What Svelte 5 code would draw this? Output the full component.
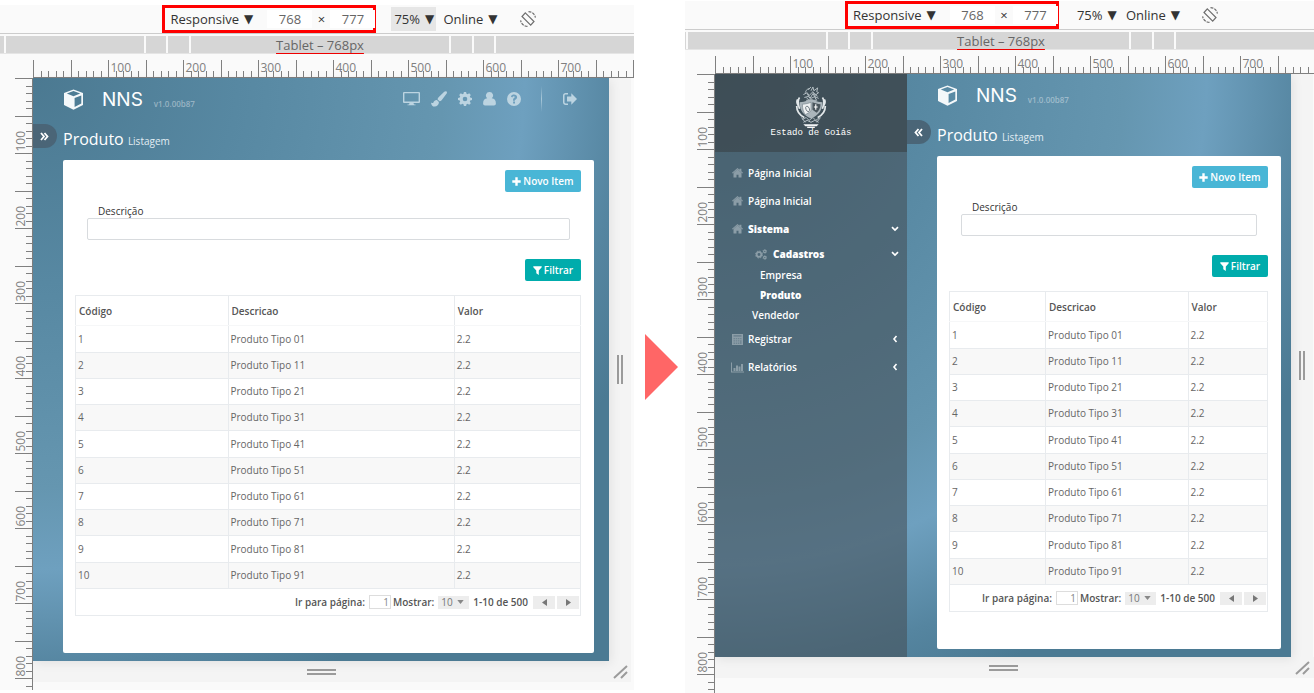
<script>
  const SCALE = 0.75;
  const ticks = Array.from({ length: 90 }, (_, i) => {
    const major = i % 5 === 0;
    return { at: Math.round(i * 10 * SCALE) + 0.5, major, label: i > 0 && i % 10 === 0 ? String(i * 10) : '' };
  });
  const ticksX = ticks.map((t, i) => (i < 80 ? t : { ...t, label: '' }));

  const rows = Array.from({ length: 10 }, (_, i) => ({ code: i + 1, name: `Produto Tipo ${i}1`, value: '2.2' }));

  const menu = [
    { label: 'Página Inicial', icon: 'home', level: 1 },
    { label: 'Página Inicial', icon: 'home', level: 1 },
    { label: 'Sistema', icon: 'home', level: 1, bold: true, arrow: 'down' },
    { label: 'Cadastros', icon: 'cogs', level: 2, bold: true, arrow: 'down' },
    { label: 'Empresa', level: 4 },
    { label: 'Produto', level: 4, bold: true },
    { label: 'Vendedor', level: 3 },
    { label: 'Registrar', icon: 'calc', level: 1, arrow: 'left' },
    { label: 'Relatórios', icon: 'chart', level: 1, arrow: 'left' }
  ];

  const tools = [
    { name: 'desktop', title: 'Tela' },
    { name: 'brush', title: 'Tema' },
    { name: 'gear', title: 'Configurações' },
    { name: 'user', title: 'Usuário' },
    { name: 'help', title: 'Ajuda' }
  ];
</script>

{#snippet icon(name)}
  {#if name === 'desktop'}
    <svg width="17" height="14" viewBox="0 0 17 14"><path fill-rule="evenodd" d="M1 0h15a1 1 0 0 1 1 1v9a1 1 0 0 1-1 1h-5.500l.5 1.500h1.500V13.300h-8V12.500H6L6.500 11H1a1 1 0 0 1-1-1V1a1 1 0 0 1 1-1zm.4 1.300v8.200h14.200V1.300z" /></svg>
  {:else if name === 'brush'}
    <svg width="16" height="16" viewBox="0 0 16 16"><path d="M15.600.5c.6.600.4 1.500-.1 2.300L10.600 9.200c-.6.700-1.200 1.100-2 1.100L6.600 8.400c0-.8.300-1.500 1-2.100L13.200.8c.8-.7 1.700-.9 2.400-.3zM5.900 9.100l2 1.900c.2 2.600-1.800 4.600-4.200 4.600C1.300 15.600.3 13.900 0 11.400c1 .7 1.700 1 2.300.3.700-1.500 1.900-2.700 3.600-2.600z" /></svg>
  {:else if name === 'gear'}
    <svg width="14" height="14" viewBox="0 0 14 14"><path fill-rule="evenodd" d="M5.900 0h2.200l.4 1.800 1.100.5 1.600-1 1.600 1.600-1 1.500.4 1.200 1.800.3v2.200l-1.800.4-.4 1.100 1 1.600-1.600 1.600-1.600-1-1.100.4L8.100 14H5.900l-.4-1.800-1.100-.4-1.600 1-1.600-1.600 1-1.600-.4-1.100L0 8.100V5.900l1.800-.3.400-1.200-1-1.500 1.600-1.600 1.600 1 1.100-.5zM7 4.700a2.300 2.300 0 1 0 0 4.600 2.300 2.300 0 0 0 0-4.600z" /></svg>
  {:else if name === 'user'}
    <svg width="13" height="14" viewBox="0 0 13 14"><path d="M6.500 0a3.500 3.500 0 0 1 2.300 6.200c2.700.1 4.100 2 4.100 5.300 0 1.200-.8 2-1.900 2H2c-1.100 0-1.900-.8-1.900-2C.1 8.200 1.500 6.300 4.200 6.200A3.500 3.500 0 0 1 6.500 0z" /></svg>
  {:else if name === 'help'}
    <svg width="14" height="14" viewBox="0 0 14 14"><path fill-rule="evenodd" d="M7 0a7 7 0 1 1 0 14A7 7 0 0 1 7 0zM6.100 9.600v1.900h1.900V9.600zM3.900 4.400l1.300 1c.5-.7.900-1.100 1.500-1.100.7 0 1.100.3 1.100.8s-.3.700-.8 1C6.400 6.500 6 7 6 7.900v.8h1.900v-.5c0-.3.300-.5.800-.8.800-.5 1.400-1.100 1.400-2.200C10.100 3.500 8.700 2.500 7 2.500c-1.400 0-2.400.6-3.100 1.900z" /></svg>
  {:else if name === 'logout'}
    <svg width="14" height="12" viewBox="0 0 14 12"><path d="M5 0v1.500H2.700c-.7 0-1.200.5-1.200 1.200v6.600c0 .7.500 1.200 1.200 1.200H5V12H2.700C1.100 12 0 10.900 0 9.300V2.700C0 1.100 1.100 0 2.700 0zM8.300.3 14 6l-5.700 5.700V8.500H4v-5h4.300z" /></svg>
  {:else if name === 'home'}
    <svg width="11" height="10" viewBox="0 0 11 10"><path d="M5.500 1.600 9.500 5V9.500H6.500V6.800h-2v2.700H1.500V5zM5.500 0l2 1.700V.8H9.400v2.500L11 4.800l-.6.700L5.500 1.200.6 5.500 0 4.800z" /></svg>
  {:else if name === 'cogs'}
    <svg width="12" height="11" viewBox="0 0 12 11"><g fill="none" stroke="currentColor"><circle cx="4" cy="5.500" r="2.300" stroke-width="1.700" /><circle cx="4" cy="5.500" r="3.500" stroke-width="1" stroke-dasharray="1.500 1.250" /><circle cx="9.800" cy="2.400" r="1.200" stroke-width="1.200" /><circle cx="9.800" cy="8.600" r="1.200" stroke-width="1.200" /><circle cx="9.800" cy="2.400" r="2" stroke-width=".6" stroke-dasharray="1 1" /><circle cx="9.800" cy="8.600" r="2" stroke-width=".6" stroke-dasharray="1 1" /></g></svg>
  {:else if name === 'calc'}
    <svg width="11" height="11" viewBox="0 0 11 11"><path opacity=".55" d="M0 0h11v11H0z" /><path fill-rule="evenodd" d="M0 0h11v11H0zM1.500 1v1.800h8V1zM1.500 4v1.300H3V4zm2.200 0v1.300h1.500V4zm2.200 0v1.300h1.500V4zm2.200 0v1.300h1.400V4zM1.500 6.300v1.300H3V6.300zm2.200 0v1.300h1.500V6.300zm2.200 0v1.300h1.500V6.300zM1.500 8.600v1.300H3V8.600zm2.200 0v1.300h1.500V8.600zm2.200 0v1.300h1.500V8.600zm2.200-2.300v3.600h1.400V6.300z" /></svg>
  {:else if name === 'chart'}
    <svg width="13" height="11" viewBox="0 0 13 11"><path d="M0 .5h1v9h12v1H0zM2.500 6h2v3h-2zM5 3.500h2V9H5zM7.500 4.500h2V9h-2zM10 2h2v7h-2z" /></svg>
  {:else if name === 'down'}
    <svg width="8" height="6" viewBox="0 0 8 6"><path d="m1 1.200 3 2.800 3-2.800" fill="none" stroke="currentColor" stroke-width="1.700" /></svg>
  {:else if name === 'left'}
    <svg width="6" height="8" viewBox="0 0 6 8"><path d="M4.500 1 2 4l2.500 3" fill="none" stroke="currentColor" stroke-width="1.600" /></svg>
  {:else if name === 'plus'}
    <svg width="9" height="9" viewBox="0 0 9 9"><path d="M3.300.3h2.400v3h3v2.400h-3v3H3.300v-3h-3V3.300h3z" /></svg>
  {:else if name === 'funnel'}
    <svg width="9" height="9" viewBox="0 0 9 9"><path d="M.3.3h8.400v1L5.800 4.500V9L3.300 7.300V4.500L.3 1.300z" /></svg>
  {/if}
{/snippet}

{#snippet crest()}
  <svg class="crest" width="34" height="42" viewBox="0 0 34 44" aria-hidden="true">
    <g fill="none" stroke="#b9c3c8" stroke-width="1">
      <path d="M11 7c1-3 3-5 5-4M14 4l3-3M17 5l2-4 1 4 4-3-1 4 2 1M9 9l4-2 2 3 4-4 2 4 4-3M10 12l4-1 3 2 4-2 4 2M12 15h11M13 8l3 5 3-5 3 5M20 7l4 4M12 12l3 3M21 12l2 3" />
      <path d="M8 35l4-2 3 3 4-3 3 3 4-3M9 38l4-2 4 2 4-2 4 2M7 33l4 5M27 33l-4 5" />
    </g>
    <path d="M3 14c-2 3 0 5 1 7M5 12c-3 4-1 8 0 12M31 14c2 3 0 5-1 7M29 12c3 4 1 8 0 12M2 21c0 6 4 10 8 12M32 21c0 6-4 10-8 12" fill="none" stroke="#e3e8ea" stroke-width="1.800" />
    <path d="M5 17c7 0 9-3 12-3s5 3 12 3c0 8-4 14-12 17C9 31 5 25 5 17z" fill="#aab5bb" />
    <path d="M8 19c3 0 7-1 9-2v9c-2 2-4 3-6 4-2-3-3-6-3-11z" fill="#eef1f2" stroke="#7a878e" stroke-width=".7" />
    <path d="M18.500 17c3 1 5.500 2 8.500 2 0 4-2 7-4 9l-4.500-3z" fill="#4a565d" />
    <path d="M22 19v6M20 22h4" stroke="#fff" stroke-width="1.200" />
    <ellipse cx="13.500" cy="24" rx="1.800" ry="3" transform="rotate(-25 13.500 24)" fill="none" stroke="#66737a" stroke-width=".9" />
    <path d="M9 40h16l-2 2.200H11zM13 42.800h8V44h-8z" fill="#f4f6f7" />
  </svg>
{/snippet}

{#snippet panel(id, open)}
  <section class="panel" class:open aria-label="Tablet">
    <div class="toolbar">
      <div class="size-group">
        <button class="drop">Responsive <span class="tri">▼</span></button>
        <input class="dim" aria-label="Largura" value="768" />
        <span class="times">×</span>
        <input class="dim" aria-label="Altura" value="777" />
      </div>
      <button class="drop zoom">75% <span class="tri">▼</span></button>
      <button class="drop">Online <span class="tri">▼</span></button>
      <button class="rotate" aria-label="Girar">
        <svg class="line" width="16" height="16" viewBox="0 0 16 16" stroke="#6e6e6e" stroke-width="1.200"><path d="M5.300 1.800 14 10.500 10.700 14.200 2 5.500z" /><path d="M8.500.6c3.500.1 6.300 2.500 6.900 6M7.500 15.400C4 15.300 1.200 12.900.6 9.400" stroke-dasharray="3 1" /></svg>
      </button>
    </div>
    <div class="media">
      <i class="edge"></i><i class="s1"></i><i class="s2"></i><i class="s3"></i>
      <span class="mid">Tablet – 768px</span>
      <i class="s3"></i><i class="s2"></i><i class="s4"></i>
    </div>
    <div class="stage">
      <svg class="ruler-x" aria-hidden="true">
        {#each ticksX as t}
          <line x1={t.at} x2={t.at} y1={t.major ? 6 : 17} y2="24" />
          {#if t.label}<text x={t.at + 2} y="18">{t.label}</text>{/if}
        {/each}
        <line x1="0" x2="100%" y1="23.500" y2="23.500" />
      </svg>
      <svg class="ruler-y" aria-hidden="true">
        <svg x="100%" overflow="visible">
          {#each ticks as t}
            <line x1={t.major ? -18 : -7} x2="0" y1={t.at} y2={t.at} />
            {#if t.label}<text transform="translate(-8 {t.at - 2}) rotate(-90)">{t.label}</text>{/if}
          {/each}
          <line x1="-.5" x2="-.5" y1="0" y2="1000" />
        </svg>
      </svg>
      <div class="device">
        {#if open}
          <nav class="side">
            <div class="brand">
              {@render crest()}
              <span>Estado de Goiás</span>
            </div>
            <ul>
              {#each menu as m}
                <li class="l{m.level}" class:bold={m.bold}>
                  <a href="#menu">
                    {#if m.icon}<span class="mi">{@render icon(m.icon)}</span>{/if}
                    {m.label}
                    {#if m.arrow}<span class="arrow">{@render icon(m.arrow)}</span>{/if}
                  </a>
                </li>
              {/each}
            </ul>
          </nav>
        {/if}
        <div class="app">
          <header>
            <svg class="cube" width="21" height="21" viewBox="0 0 21 21"><path fill-rule="evenodd" fill="#f4f8fa" d="M10.500.5 20 4v12l-9.500 4.700L1 16V4zm0 1.600L3.800 4.600l6.700 2.600 6.700-2.600zM11.600 9v9l6.700-3.400V6.400z" /></svg>
            <span class="name">NNS</span>
            <span class="ver">v1.0.00b87</span>
            {#if !open}
              <div class="tools">
                {#each tools as t}
                  <button aria-label={t.title}>{@render icon(t.name)}</button>
                {/each}
                <i class="sep"></i>
                <button aria-label="Sair">{@render icon('logout')}</button>
              </div>
            {/if}
          </header>
          <div class="title">
            <button class="toggle" aria-label="Menu">
              <svg class="line" width="9" height="9" viewBox="0 0 9 9" stroke="#fff" stroke-width="1.800"><path d={open ? 'M4.500 1 1.500 4.500l3 3.500M8 1 5 4.500 8 8' : 'm1 1 3 3.500L1 8m3.500-7 3 3.500L4.500 8'} /></svg>
            </button>
            <h1>Produto <small>Listagem</small></h1>
          </div>
          <main>
            <div class="actions"><button class="btn new">{@render icon('plus')} Novo Item</button></div>
            <div class="field">
              <label for="desc-{id}">Descrição</label>
              <input id="desc-{id}" />
            </div>
            <div class="actions"><button class="btn filter">{@render icon('funnel')} Filtrar</button></div>
            <table>
              <thead><tr><th>Código</th><th>Descricao</th><th>Valor</th></tr></thead>
              <tbody>
                {#each rows as r}
                  <tr><td>{r.code}</td><td>{r.name}</td><td>{r.value}</td></tr>
                {/each}
              </tbody>
            </table>
            <div class="pager">
              <label for="page-{id}">Ir para página:</label>
              <input id="page-{id}" value="1" />
              <label for="show-{id}">Mostrar:</label>
              <span class="pick">
                <select id="show-{id}"><option>10</option></select>
                <svg width="7" height="4" viewBox="0 0 8 5"><path d="M0 0h8L4 5z" /></svg>
              </span>
              <strong>1-10 de 500</strong>
              <button aria-label="Anterior"><svg width="5" height="7" viewBox="0 0 5 7"><path d="M5 0v7L0 3.500z" /></svg></button>
              <button aria-label="Próxima"><svg width="5" height="7" viewBox="0 0 5 7"><path d="M0 0v7l5-3.500z" /></svg></button>
            </div>
          </main>
        </div>
      </div>
      <div class="grip-x"><i></i></div>
      <div class="grip-y"><i></i></div>
      <svg class="grip-xy line" width="16" height="14" viewBox="0 0 16 14" stroke="#9b9b9b" stroke-width="2"><path d="M1 13 14 1M8 13l6-6" /></svg>
    </div>
  </section>
{/snippet}

<div class="page">
  {@render panel('a', false)}
  <div class="next"><svg width="33" height="66" viewBox="0 0 33 66"><path d="M0 0 33 33 0 66z" fill="#ff6666" /></svg></div>
  {@render panel('b', true)}
</div>

<style>
  :global(body) {
    margin: 0;
    background: #fff;
  }
  .page {
    display: grid;
    grid-template-columns: 634fr 51px 629fr;
    align-items: start;
    font: 10px/14px 'Open Sans', sans-serif;
    overflow: hidden;
  }
  .page :is(button, input, select) {
    font: inherit;
    color: inherit;
    margin: 0;
    padding: 0;
    border: 0;
    background: none;
    box-sizing: border-box;
    border-radius: 0;
    outline: 0;
  }
  svg {
    display: block;
    fill: currentColor;
    flex: none;
  }
  svg.line {
    fill: none;
  }
  .next {
    padding: 334px 0 0 11px;
  }
  .panel {
    --gutter: 33px;
    margin-top: 5px;
    background: #fafafa;
    min-width: 0;
  }
  .panel.open {
    --gutter: 30px;
    margin-top: 1px;
  }

  .toolbar {
    height: 28px;
    display: flex;
    align-items: center;
    justify-content: center;
    border-bottom: 1px solid #ccc;
    font: 13px/18px 'Open Sans', sans-serif;
    color: #333;
    padding-left: 64px;
  }
  .size-group {
    display: flex;
    align-items: center;
    box-sizing: border-box;
    width: 214px;
    height: 28px;
    border: 3px solid #f00;
    padding-left: 5px;
    margin-right: 15px;
  }
  .page .drop {
    display: flex;
    align-items: center;
    gap: 5px;
    white-space: nowrap;
  }
  .tri {
    font: 12px/16px 'DejaVu Sans', sans-serif;
  }
  .page .size-group .dim {
    width: 45px;
    height: 18px;
    background: #fff;
    text-align: center;
    color: #666;
  }
  .size-group .drop {
    width: 97px;
    flex: none;
  }
  .times {
    width: 18px;
    flex: none;
    text-align: center;
  }
  .page .zoom {
    height: 24px;
    width: 45px;
    padding-left: 3px;
    background: #e6e6e6;
    margin-right: 7px;
  }
  .page .open .zoom {
    background: none;
  }
  .page .rotate {
    margin-left: 22px;
  }

  .media {
    display: flex;
    gap: 2px;
    height: 17px;
    padding-top: 2px;
    border-bottom: 1px solid #e5e5e5;
    font: 13px/19px 'Open Sans', sans-serif;
    color: #666;
  }
  .media > * {
    background: #d6d6d6;
  }
  .edge {
    width: 4px;
  }
  .open .edge {
    width: 1px;
  }
  .s1,
  .s4 {
    flex: 140;
  }
  .s2 {
    width: 20px;
  }
  .s3 {
    width: 21px;
  }
  .mid {
    flex: 260;
    text-align: center;
    text-decoration: underline;
    text-decoration-color: #e00;
    text-underline-offset: 3px;
    text-decoration-skip-ink: none;
    white-space: nowrap;
  }

  .stage {
    position: relative;
    display: grid;
    grid-template-columns: var(--gutter) 1fr 25px;
    grid-template-rows: 24px auto 29px;
    background: #fafafa;
  }
  .open .stage {
    grid-template-columns: var(--gutter) 1fr 23px;
    grid-template-rows: 24px auto 36px;
  }
  .ruler-x {
    grid-area: 1 / 2 / 2 / 4;
    width: 100%;
    height: 24px;
  }
  .ruler-y {
    grid-area: 2 / 1 / 4 / 2;
    width: 100%;
    height: 100%;
  }
  .ruler-x line,
  .ruler-y line {
    stroke: #808080;
    stroke-width: 1;
  }
  .ruler-x text,
  .ruler-y text {
    font: 12px 'Open Sans', sans-serif;
    fill: #808080;
  }
  .grip-x,
  .grip-y {
    background: #f4f4f4;
    display: flex;
    align-items: center;
    justify-content: center;
  }
  .grip-x {
    grid-area: 2 / 3;
    width: 22px;
  }
  .grip-y {
    grid-area: 3 / 2 / 4 / 4;
    height: 21px;
    margin-right: 3px;
  }
  .open .grip-y {
    margin-right: 0;
  }
  .grip-x i {
    width: 2px;
    height: 29px;
    border: solid #9b9b9b;
    border-width: 0 2px;
  }
  .grip-y i {
    width: 29px;
    height: 2px;
    border: solid #9b9b9b;
    border-width: 2px 0;
    margin-right: 22px;
  }
  .grip-xy {
    grid-area: 3 / 3;
    margin: 4px 0 0 4px;
  }

  .device {
    grid-area: 2 / 2;
    display: flex;
    min-width: 0;
    position: relative;
    z-index: 1;
    background: radial-gradient(circle at 0 0, #4b7991 0, #5788a2 25%, #6596b0 50%, #6ea0bf 60%, #5585a0 72%, #4b7a93 80%);
    box-shadow: 2px 2px 10px rgba(0, 0, 0, 0.08);
  }
  .side {
    width: 192px;
    background: rgba(70, 82, 90, 0.6);
    color: #fff;
    flex: none;
  }
  .brand {
    height: 78px;
    box-sizing: border-box;
    padding-top: 12px;
    display: flex;
    flex-direction: column;
    align-items: center;
    background: rgba(54, 62, 66, 0.55);
    font: 9px/10px 'Liberation Mono', monospace;
    white-space: nowrap;
  }
  .side ul {
    list-style: none;
    margin: 0;
    padding: 7px 0 0;
  }
  .side a {
    display: flex;
    align-items: center;
    height: 28px;
    color: #fff;
    text-decoration: none;
    font-weight: 600;
    padding: 0 8px 0 15px;
  }
  .bold a {
    font-weight: 800;
  }
  .mi {
    width: 14px;
    margin-right: 4px;
    display: flex;
    color: #8b9da7;
    justify-content: center;
  }
  .side .l2 a {
    height: 22px;
    padding-left: 38px;
  }
  .side .l2 .mi {
    width: 16px;
  }
  .side .l3 a {
    height: 20px;
    padding-left: 37px;
  }
  .side .l4 a {
    height: 20px;
    padding-left: 45px;
  }
  .arrow {
    margin-left: auto;
    width: 8px;
    display: flex;
    justify-content: center;
  }

  .app {
    flex: 1;
    min-width: 0;
    padding: 0 15px 8px 30px;
    color: #fff;
  }
  .open .app {
    padding-right: 10px;
  }
  header {
    display: flex;
    align-items: center;
    height: 42px;
  }
  .name {
    font: 19px/24px Inter, sans-serif;
    padding-top: 2px;
    margin-left: 18px;
  }
  .ver {
    font: 600 8px/10px 'Open Sans', sans-serif;
    color: rgba(255, 255, 255, 0.4);
    margin: 10px 0 0 11px;
  }
  .tools {
    display: flex;
    align-items: center;
    margin-left: auto;
    gap: 11px;
    color: #bcd4e1;
    padding-right: 17px;
  }
  .sep {
    width: 1px;
    height: 26px;
    background: linear-gradient(transparent, #a9c8d9, transparent);
    margin: 0 10px 0 9px;
  }
  .title {
    display: flex;
    align-items: center;
    height: 40px;
    margin-left: -30px;
  }
  .page .toggle {
    width: 24px;
    height: 24px;
    margin-top: -8px;
    border-radius: 0 12px 12px 0;
    background: #4a6577;
    display: flex;
    align-items: center;
    padding-left: 7px;
  }
  h1 {
    margin: 0 0 0 6px;
    font: 400 16px/24px 'Open Sans', sans-serif;
  }
  small {
    font-size: 10px;
    color: #e2edf3;
  }
  main {
    background: #fff;
    border-radius: 2px;
    padding: 10px 13px 37px 12px;
    color: #666;
  }
  .actions {
    display: flex;
    justify-content: flex-end;
  }
  .page .btn {
    display: flex;
    align-items: center;
    justify-content: center;
    gap: 2px;
    height: 22px;
    color: #fff;
    border-radius: 2px;
    font-weight: 600;
  }
  .page .new {
    width: 76px;
    background: #49b6d6;
  }
  .page .filter {
    width: 56px;
    background: #00acac;
  }
  .field {
    padding: 12px 11px 19px 12px;
    color: #333;
  }
  .field label {
    display: block;
    padding-left: 11px;
  }
  .page .field input {
    display: block;
    width: 100%;
    height: 22px;
    border: 1px solid #d8dbde;
    border-radius: 2px;
    padding: 0 6px;
  }
  table {
    width: 100%;
    table-layout: fixed;
    border-collapse: collapse;
    margin-top: 14px;
  }
  th,
  td {
    height: 26px;
    padding: 0 0 1px 3px;
    box-sizing: border-box;
    border: 1px solid #e8ebee;
    text-align: left;
    font-weight: 400;
  }
  td {
    padding-left: 2px;
  }
  th {
    height: 30px;
    padding-bottom: 0;
    font-weight: 600;
    color: #555;
    border-bottom-color: #f6f7f8;
  }
  th:first-child {
    width: 30.2%;
  }
  th:last-child {
    width: 25%;
  }
  tbody tr:nth-child(4n + 1) td {
    height: 27px;
  }
  tbody tr:nth-child(even) {
    background: #f8f8f8;
  }
  .pager {
    display: flex;
    align-items: center;
    justify-content: flex-end;
    height: 26px;
    border: solid #e8ebee;
    border-width: 0 1px 1px;
    padding-right: 1px;
    font-weight: 600;
    color: #555;
    white-space: nowrap;
  }
  .page .pager input {
    width: 22px;
    height: 14px;
    border: 1px solid #ddd;
    text-align: right;
    font-weight: 400;
    color: #888;
    padding-right: 1px;
    margin: 0 2px 0 4px;
  }
  .pick {
    display: flex;
    align-items: center;
    background: #ededed;
    height: 13px;
    width: 31px;
    margin: 0 4px;
    color: #888;
  }
  .page .pick select {
    appearance: none;
    width: 19px;
    padding-left: 3px;
    font-weight: 400;
    color: #777;
  }
  .pager strong {
    font-weight: 600;
  }
  .page .pager button {
    width: 22px;
    height: 13px;
    background: #ededed;
    display: flex;
    align-items: center;
    justify-content: center;
    margin-left: 2px;
    color: #777;
  }
  .page .pager strong + button {
    margin-left: 5px;
  }
</style>
